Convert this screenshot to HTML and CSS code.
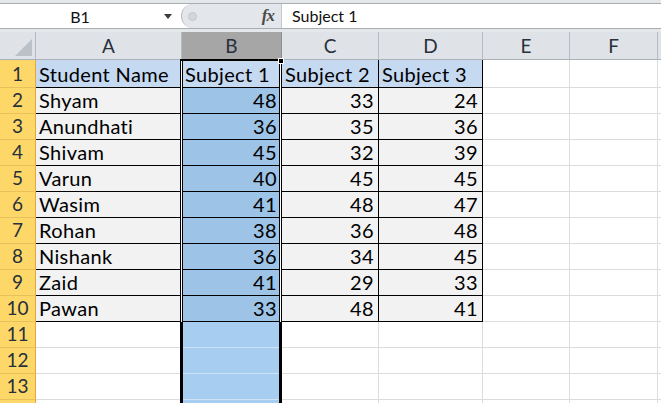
FILE: index.html
```html
<!DOCTYPE html>
<html>
<head>
<meta charset="utf-8">
<link rel="stylesheet" href="styles.css">
</head>
<body>
<div class="fbar">
  <div class="frow">
    <div class="namebox"><span class="nbtext">B1</span><span class="dd"></span></div>
    <div class="fxzone"><span class="knob"></span><span class="fx">fx</span></div>
    <div class="finput">Subject 1</div>
  </div>
</div>
<div class="sheet">
  <div class="c corner"></div><div class="c ch">A</div><div class="c ch on">B</div><div class="c ch">C</div><div class="c ch">D</div><div class="c ch">E</div><div class="c ch">F</div><div class="c ch"></div>

  <div class="c rh">1</div><div class="c t hd">Student Name</div><div class="c t hd">Subject 1</div><div class="c t hd">Subject 2</div><div class="c t hd">Subject 3</div><div class="c"></div><div class="c"></div><div class="c"></div>
  <div class="c rh">2</div><div class="c t gy">Shyam</div><div class="c t sb r">48</div><div class="c t gy r">33</div><div class="c t gy r">24</div><div class="c"></div><div class="c"></div><div class="c"></div>
  <div class="c rh">3</div><div class="c t gy">Anundhati</div><div class="c t sb r">36</div><div class="c t gy r">35</div><div class="c t gy r">36</div><div class="c"></div><div class="c"></div><div class="c"></div>
  <div class="c rh">4</div><div class="c t gy">Shivam</div><div class="c t sb r">45</div><div class="c t gy r">32</div><div class="c t gy r">39</div><div class="c"></div><div class="c"></div><div class="c"></div>
  <div class="c rh">5</div><div class="c t gy">Varun</div><div class="c t sb r">40</div><div class="c t gy r">45</div><div class="c t gy r">45</div><div class="c"></div><div class="c"></div><div class="c"></div>
  <div class="c rh">6</div><div class="c t gy">Wasim</div><div class="c t sb r">41</div><div class="c t gy r">48</div><div class="c t gy r">47</div><div class="c"></div><div class="c"></div><div class="c"></div>
  <div class="c rh">7</div><div class="c t gy">Rohan</div><div class="c t sb r">38</div><div class="c t gy r">36</div><div class="c t gy r">48</div><div class="c"></div><div class="c"></div><div class="c"></div>
  <div class="c rh">8</div><div class="c t gy">Nishank</div><div class="c t sb r">36</div><div class="c t gy r">34</div><div class="c t gy r">45</div><div class="c"></div><div class="c"></div><div class="c"></div>
  <div class="c rh">9</div><div class="c t gy">Zaid</div><div class="c t sb r">41</div><div class="c t gy r">29</div><div class="c t gy r">33</div><div class="c"></div><div class="c"></div><div class="c"></div>
  <div class="c rh">10</div><div class="c t gy">Pawan</div><div class="c t sb r">33</div><div class="c t gy r">48</div><div class="c t gy r">41</div><div class="c"></div><div class="c"></div><div class="c"></div>
  <div class="c rh">11</div><div class="c"></div><div class="c se"></div><div class="c"></div><div class="c"></div><div class="c"></div><div class="c"></div><div class="c"></div>
  <div class="c rh">12</div><div class="c"></div><div class="c se"></div><div class="c"></div><div class="c"></div><div class="c"></div><div class="c"></div><div class="c"></div>
  <div class="c rh">13</div><div class="c"></div><div class="c se"></div><div class="c"></div><div class="c"></div><div class="c"></div><div class="c"></div><div class="c"></div>
  <div class="c rh"></div><div class="c"></div><div class="c se"></div><div class="c"></div><div class="c"></div><div class="c"></div><div class="c"></div><div class="c"></div>

  <div class="selbox"></div>
  <div class="selin"></div>
  <div class="handle"></div>
</div>
</body>
</html>
```

FILE: styles.css
```css
html, body {
  margin: 0;
  padding: 0;
}
body {
  width: 661px;
  height: 403px;
  overflow: hidden;
  background: #fff;
  font-family: Lato, "Liberation Sans", sans-serif;
  color: #000;
}

/* formula bar */
.fbar {
  height: 32px;
  box-sizing: border-box;
  padding-top: 3px;
  background: #e5e8eb;
}
.frow {
  display: flex;
  height: 26px;
  box-sizing: border-box;
  border-top: 1px solid #a9adb3;
  border-bottom: 1px solid #a9adb3;
  background: #fff;
}
.namebox {
  width: 181px;
  display: flex;
  align-items: center;
}
.nbtext {
  width: 160px;
  text-align: center;
  font-size: 16px;
  color: #111;
}
.dd {
  width: 0;
  height: 0;
  margin-left: 4px;
  border-left: 4px solid transparent;
  border-right: 4px solid transparent;
  border-top: 5px solid #3c3c3c;
}
.fxzone {
  width: 100px;
  box-sizing: border-box;
  display: flex;
  align-items: center;
  justify-content: space-between;
  padding: 0 7px 0 6px;
  background: #e3e6ea;
  border-left: 1px solid #b4b8be;
  border-radius: 12px 0 0 12px;
}
.knob {
  width: 7px;
  height: 7px;
  border-radius: 50%;
  background: #d3d6db;
  border: 1px solid #c3c7cc;
}
.fx {
  font-family: "Liberation Serif", serif;
  font-style: italic;
  font-weight: bold;
  font-size: 17px;
  color: #4b4b4b;
  letter-spacing: -1px;
}
.finput {
  flex: 1;
  border-left: 1px solid #c4c8cd;
  padding-left: 10px;
  font-size: 16px;
  line-height: 24px;
  color: #111;
}

/* sheet grid */
.sheet {
  position: relative;
  display: grid;
  grid-template-columns: 36px 146px 100px 97px 104px 87px 88px 1fr;
  grid-template-rows: 28px 28px repeat(12, 26px) 3px;
}
.c {
  box-sizing: border-box;
  border-right: 1px solid #dadcdd;
  border-bottom: 1px solid #dadcdd;
  font-size: 20px;
  letter-spacing: 0.35px;
  line-height: 20px;
  padding: 0 4px 3px 3px;
  display: flex;
  align-items: flex-end;
  white-space: nowrap;
  overflow: hidden;
}
.corner {
  position: relative;
  background: #dfe3e8;
  border-right-color: #b5bbc3;
  border-bottom-color: #a9b1bb;
}
.corner::after {
  content: "";
  position: absolute;
  right: 3px;
  bottom: 3px;
  width: 0;
  height: 0;
  border-left: 17px solid transparent;
  border-bottom: 17px solid #bac1c9;
}
.ch {
  background: #dfe3e8;
  border-right-color: #b5bbc3;
  border-bottom-color: #a9b1bb;
  justify-content: center;
  align-items: center;
  padding: 0;
  font-size: 19px;
  letter-spacing: 0;
  color: #27303b;
}
.ch.on {
  background: #a6a6a6;
  border-right-color: #8e8e8e;
  border-bottom-color: #7d7d7d;
}
.rh {
  background: #fdd868;
  border-right-color: #e2a93a;
  border-bottom-color: #e8c05c;
  justify-content: center;
  padding: 0 0 3px 0;
  font-size: 19px;
  letter-spacing: 0;
  color: #27303b;
}
.t {
  border-right-color: #000;
  border-bottom-color: #000;
}
.hd { background: #c5d9f1; }
.gy { background: #f2f2f2; }
.sb { background: #9dc3e6; }
.se {
  background: #a7cdf0;
  border-bottom-color: #cde2f5;
}
.r { justify-content: flex-end; }

/* selection overlay */
.selbox {
  position: absolute;
  left: 180px;
  top: 27px;
  width: 102px;
  bottom: 0;
  box-sizing: border-box;
  border-left: 3px solid #000;
  border-right: 3px solid #000;
  border-top: 2px solid #000;
  pointer-events: none;
}
.selin {
  position: absolute;
  left: 181px;
  top: 29px;
  width: 100px;
  height: 261px;
  box-sizing: border-box;
  border-left: 1px solid #fff;
  border-right: 1px solid #fff;
  pointer-events: none;
}
.handle {
  position: absolute;
  left: 278px;
  top: 26px;
  width: 4px;
  height: 4px;
  background: #000;
  border: 1px solid #fff;
}
```
